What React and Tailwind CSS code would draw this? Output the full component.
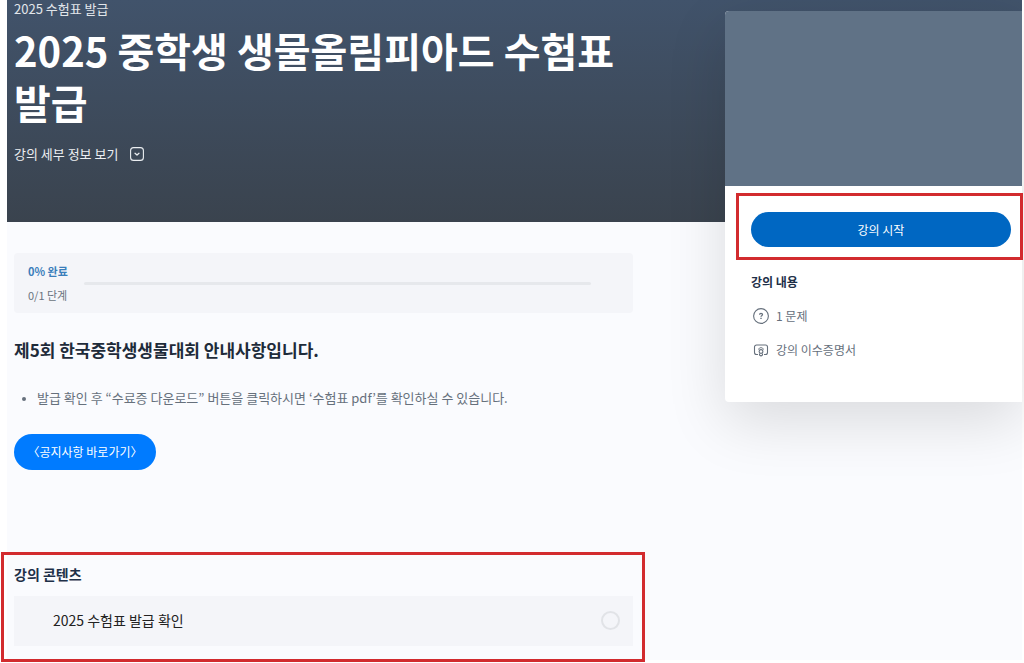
import React, { useState } from 'react';

const courseIncludes = [
  { id: 'quiz', label: '1 문제', icon: QuizIcon },
  { id: 'certificate', label: '강의 이수증명서', icon: CertificateIcon },
];

const lessons = [{ id: 1, title: '2025 수험표 발급 확인' }];

function ChevronBoxIcon() {
  return (
    <svg width="14" height="14" viewBox="0 0 14 14" fill="none" stroke="currentColor" aria-hidden="true">
      <rect x="0.6" y="0.6" width="12.8" height="12.8" rx="3" strokeWidth="1.1" />
      <path d="M5 6.3 7 8l2-1.700" strokeWidth="1.300" strokeLinecap="round" strokeLinejoin="round" />
    </svg>
  );
}

function QuizIcon() {
  return (
    <svg width="16" height="16" viewBox="0 0 16 16" fill="none" stroke="currentColor" aria-hidden="true">
      <circle cx="8" cy="8" r="7.4" strokeWidth="1.1" />
      <path d="M6.6 6.7c0-.9.6-1.4 1.4-1.4s1.5.5 1.5 1.3c0 1-1.5 1.1-1.5 2.1" strokeWidth="1.3" />
      <path d="M8 9.8v1.3" strokeWidth="1.4" />
    </svg>
  );
}

function CertificateIcon() {
  return (
    <svg width="16" height="16" viewBox="0 0 16 16" fill="none" stroke="currentColor" aria-hidden="true">
      <path d="M5 12.500H3.500a2 2 0 0 1-2-2V5a2 2 0 0 1 2-2h9a2 2 0 0 1 2 2v5.500a2 2 0 0 1-2 2H11" strokeWidth="1.100" />
      <path d="M5.500 7.500C5.800 6.300 6.800 5.700 8 5.700s2.200.6 2.500 1.800" strokeWidth="1" />
      <circle cx="8" cy="9.500" r="1.900" strokeWidth="1.100" />
      <path d="M6.500 11.500v1.500L8 14l1.500-1v-1.500" strokeWidth="1.100" strokeLinejoin="round" />
    </svg>
  );
}

function CourseHeader({ open, onToggle }) {
  return (
    <header className="col-span-2 col-start-1 row-start-1 h-[222px] bg-linear-to-b from-[#41536b] to-[#3a434e] pl-[7px] text-white">
      <div className="max-w-[619px]">
        <p className="text-[13px] leading-[18px] text-[#e2e6ea]">2025 수험표 발급</p>
        <h1 className="mt-[6px] text-[40px] leading-[52px] font-bold">2025 중학생 생물올림피아드 수험표 발급</h1>
        <button
          type="button"
          onClick={onToggle}
          aria-expanded={open}
          className="mt-[16px] flex cursor-pointer items-center gap-[12px] text-[13px] leading-[20px] text-[#eceff2]"
        >
          강의 세부 정보 보기
          <ChevronBoxIcon />
        </button>
      </div>
    </header>
  );
}

function CourseCard() {
  return (
    <aside className="relative col-start-2 row-span-2 row-start-1 mt-[11px] h-[391px] self-start rounded-l-[4px] bg-white shadow-[0_20px_60px_rgba(0,0,0,0.13)]">
      <div className="h-[175px] rounded-tl-[4px] bg-[#607286]"></div>
      <div className="mt-[7px] -mr-px ml-[11px] border-3 border-[#d22b2e] pt-[16px] pr-[9px] pb-[10px] pl-[12px]">
        <button type="button" className="h-[35px] w-full cursor-pointer rounded-full bg-[#0067c2] text-[12px] leading-[20px] text-white">
          강의 시작
        </button>
      </div>
      <div className="pt-[12px] pl-[26px]">
        <h2 className="text-[12px] leading-[20px] font-bold text-[#1e3048]">강의 내용</h2>
        <ul className="mt-[14px] space-y-[14px] text-[12px] leading-[20px] text-[#66707c]">
          {courseIncludes.map(({ id, label, icon: Icon }) => (
            <li key={id} className="flex items-center gap-[7px] pl-[2px]">
              <Icon /> {label}
            </li>
          ))}
        </ul>
      </div>
    </aside>
  );
}

export default function App() {
  const [open, setOpen] = useState(false);
  const [done, setDone] = useState([]);
  const percent = Math.round((done.length / lessons.length) * 100);

  const toggleLesson = (id) => {
    setDone(done.includes(id) ? done.filter((d) => d !== id) : [...done, id]);
  };

  return (
    <div className="bg-white pr-[2px] pb-[3px] pl-[7px] font-['Noto_Sans_CJK_KR',sans-serif]">
      <div className="grid grid-cols-[minmax(0,1fr)_297px] grid-rows-[auto_1fr] bg-[#fafbfe]">
        <CourseHeader open={open} onToggle={() => setOpen(!open)} />

        <main className="col-start-1 row-start-2 max-w-[626px] pt-[31px] pl-[7px]">
          {/* Progress */}
          <section className="flex h-[60px] items-center rounded-[4px] bg-[#f4f5f9] pr-[42px] pl-[14px]">
            <div className="w-[56px] text-[11px] leading-[24px]">
              <p className="font-bold text-[#3a7ebb]">{percent}% 완료</p>
              <p className="text-[#6b7480]">
                {done.length}/{lessons.length} 단계
              </p>
            </div>
            <div className="h-[3px] flex-1 rounded-full bg-[#e6e8ec]">
              <div className="h-full rounded-full bg-[#0067c2]" style={{ width: `${percent}%` }}></div>
            </div>
          </section>

          <h2 className="mt-[25px] text-[17px] leading-[24px] font-bold text-[#1e2b3a]">제5회 한국중학생생물대회 안내사항입니다.</h2>
          <ul className="mt-[24px] list-disc pl-[23px] text-[13px] leading-[24px] text-[#66707c] marker:text-[10px]">
            <li>발급 확인 후 “수료증 다운로드” 버튼을 클릭하시면 ‘수험표 pdf’를 확인하실 수 있습니다.</li>
          </ul>
          <a href="#notice" className="mt-[24px] flex h-[36px] w-[142px] items-center justify-center rounded-full bg-[#007bff] text-[12px] leading-[20px] text-white">
            〈공지사항 바로가기〉
          </a>

          {/* Course content */}
          <section className="mt-[82px] -mr-[12px] -mb-[2px] -ml-[13px] border-3 border-[#d22b2e] pt-[9px] pr-[9px] pb-[13px] pl-[10px]">
            <h2 className="text-[14px] leading-[20px] font-bold text-[#1e3048]">강의 콘텐츠</h2>
            <ul className="mt-[12px]">
              {lessons.map((lesson) => (
                <li key={lesson.id} className="flex h-[50px] items-center justify-between bg-[#f4f5f9] pr-[13px] pb-[2px] pl-[39px]">
                  <label htmlFor={`lesson-${lesson.id}`} className="text-[14px] leading-[20px] text-[#222]">
                    {lesson.title}
                  </label>
                  <input
                    id={`lesson-${lesson.id}`}
                    type="checkbox"
                    checked={done.includes(lesson.id)}
                    onChange={() => toggleLesson(lesson.id)}
                    className="size-[19px] appearance-none rounded-full border-2 border-[#e1e3e7] checked:bg-[#0067c2]"
                  />
                </li>
              ))}
            </ul>
          </section>
        </main>

        <CourseCard />
      </div>
    </div>
  );
}
